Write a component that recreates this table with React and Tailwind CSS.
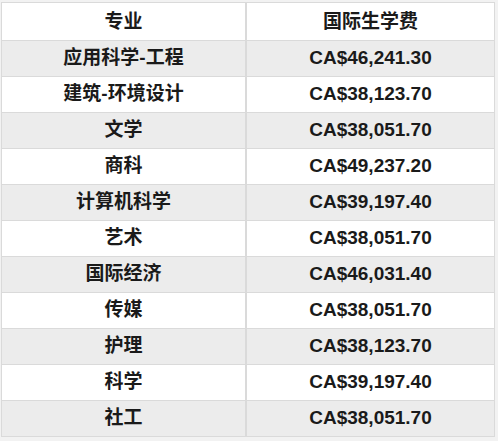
import React from 'react';

const rows = [
    ['应用科学-工程', 'CA$46,241.30'],
    ['建筑-环境设计', 'CA$38,123.70'],
    ['文学', 'CA$38,051.70'],
    ['商科', 'CA$49,237.20'],
    ['计算机科学', 'CA$39,197.40'],
    ['艺术', 'CA$38,051.70'],
    ['国际经济', 'CA$46,031.40'],
    ['传媒', 'CA$38,051.70'],
    ['护理', 'CA$38,123.70'],
    ['科学', 'CA$39,197.40'],
    ['社工', 'CA$38,051.70'],
];

const cjk = { fontFamily: '"Liberation Sans", "Noto Sans CJK SC", sans-serif' };

export default function App() {
    return (
        <div className="w-[498px] h-[441px] bg-[#f2f2f2] pt-[2px] pl-[1px]">
            <div className="w-[494px] border border-[#dadada] bg-white text-[#1a1a1a]" style={cjk}>
                {/* Header */}
                <div className="grid grid-cols-[245px_1fr] h-[37px]">
                    <div className="flex items-center justify-center border-r-2 border-[#dadada] text-[19px] font-semibold pt-[2px]">专业</div>
                    <div className="flex items-center justify-center text-[19px] font-semibold pt-[2px]">国际生学费</div>
                </div>
                {rows.map(([major, fee], i) => (
                    <div
                        key={major}
                        className={`grid grid-cols-[245px_1fr] h-[36px] border-t border-[#dadada] ${i % 2 === 0 ? 'bg-[#ececec]' : 'bg-white'}`}
                    >
                        <div className="flex items-center justify-center border-r-2 border-[#dadada] text-[19px] font-semibold">{major}</div>
                        <div className="flex items-center justify-center text-[19px] font-bold">{fee}</div>
                    </div>
                ))}
            </div>
        </div>
    );
}
